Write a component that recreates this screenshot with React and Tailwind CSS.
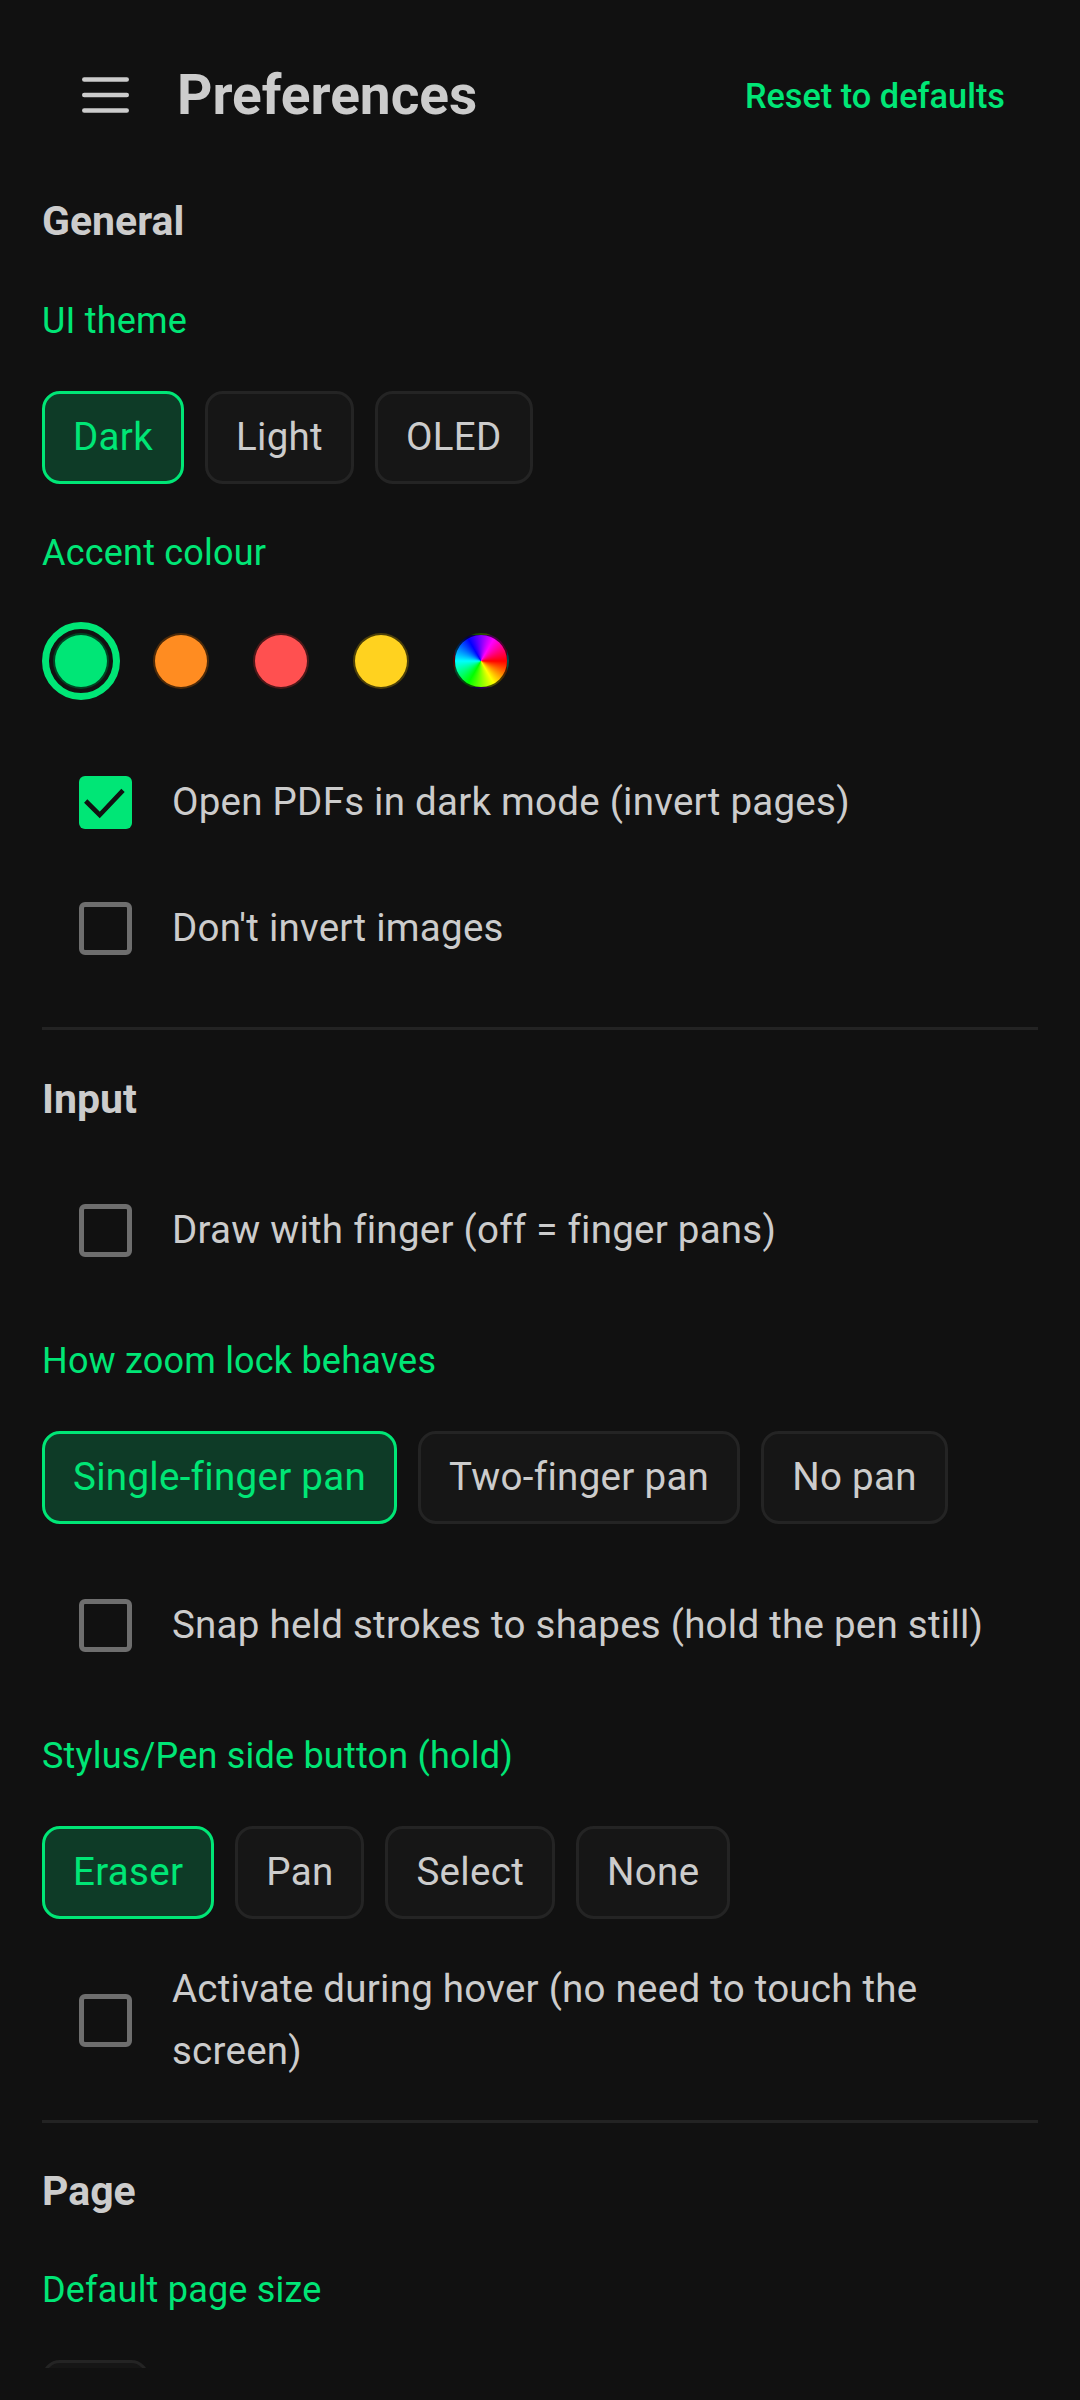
import React, { useState } from 'react';

const Hamburger = () => (
  <svg width="47" height="36" viewBox="0 0 47 36" className="shrink-0">
    <g stroke="#cccccc" strokeWidth="4.5" strokeLinecap="round">
      <line x1="2.25" y1="2.5" x2="44.75" y2="2.5" />
      <line x1="2.25" y1="18" x2="44.75" y2="18" />
      <line x1="2.25" y1="33.5" x2="44.75" y2="33.5" />
    </g>
  </svg>
);

const SectionTitle = ({ children, className = '' }) => (
  <h2 className={`text-[41px] leading-[49px] font-bold text-[#cccccc] ${className}`}>{children}</h2>
);

const Label = ({ children, className = '' }) => (
  <div className={`text-[36px] leading-[42px] tracking-[0.2px] text-[#00e676] ${className}`}>{children}</div>
);

const Segmented = ({ options, value, onChange, className = '' }) => (
  <div className={`flex gap-[21px] ${className}`}>
    {options.map((opt) => {
      const active = opt === value;
      return (
        <button
          key={opt}
          onClick={() => onChange(opt)}
          className={
            active
              ? 'h-[93px] px-[28px] rounded-[18px] border-[3px] border-[#00e676] bg-[#0e3b27] text-[#00e676] text-[38.5px] tracking-[0.3px] leading-none'
              : 'h-[93px] px-[28px] rounded-[18px] border-[3px] border-[#242424] bg-[#161616] text-[#cccccc] text-[38.5px] tracking-[0.3px] leading-none'
          }
        >
          {opt}
        </button>
      );
    })}
  </div>
);

const Checkbox = ({ checked }) =>
  checked ? (
    <div className="w-[53px] h-[53px] shrink-0 rounded-[6px] bg-[#00e676]">
      <svg width="53" height="53" viewBox="0 0 53 53">
        <path d="M6.7 25 L20.7 39 L44 14.3" fill="none" stroke="#111111" strokeWidth="4.6" />
      </svg>
    </div>
  ) : (
    <div className="w-[53px] h-[53px] shrink-0 rounded-[6px] border-[5px] border-[#6e6e6e]" />
  );

const CheckRow = ({ label, checked, onToggle, className = '' }) => (
  <div
    onClick={onToggle}
    className={`flex items-center min-h-[126px] pl-[37px] gap-[40px] cursor-pointer ${className}`}
  >
    <Checkbox checked={checked} />
    <span className="flex-1 text-[38.5px] leading-[62px] tracking-[0.25px] text-[#cccccc]">{label}</span>
  </div>
);

const Divider = ({ className = '' }) => <div className={`h-[3px] bg-[#232323] ${className}`} />;

const swatches = [
  { id: 'green', cls: 'bg-[#00e676]' },
  { id: 'orange', cls: 'bg-[#ff8c21]' },
  { id: 'red', cls: 'bg-[#ff5050]' },
  { id: 'yellow', cls: 'bg-[#ffd21f]' },
  { id: 'custom', cls: 'bg-[image:conic-gradient(from_90deg,#ff0000,#ffff00,#00ff00,#00ffff,#0000ff,#ff00ff,#ff0000)]' },
];

const App = () => {
  const [theme, setTheme] = useState('Dark');
  const [accent, setAccent] = useState('green');
  const [zoomLock, setZoomLock] = useState('Single-finger pan');
  const [sideButton, setSideButton] = useState('Eraser');
  const [checks, setChecks] = useState({
    darkPdf: true,
    noInvertImages: false,
    drawFinger: false,
    snapShapes: false,
    hover: false,
  });

  const toggle = (key) => setChecks((prev) => ({ ...prev, [key]: !prev[key] }));

  return (
    <div className="min-h-[2400px] bg-[#111111] font-['Roboto',sans-serif]">
      <div className="h-[2368px] overflow-hidden">
        {/* HEADER */}
        <header className="h-[190px] flex items-center pl-[82px] pr-[75px]">
          <Hamburger />
          <h1 className="ml-[48px] text-[55px] leading-[66px] font-bold text-[#cccccc]">Preferences</h1>
          <button className="ml-auto text-[34.3px] leading-[42px] font-medium text-[#00e676] translate-y-[1px]">
            Reset to defaults
          </button>
        </header>

        <main className="px-[42px]">
          {/* GENERAL */}
          <SectionTitle className="mt-[7px]">General</SectionTitle>
          <Label className="mt-[54px]">UI theme</Label>
          <Segmented className="mt-[49px]" options={['Dark', 'Light', 'OLED']} value={theme} onChange={setTheme} />

          <Label className="mt-[48px]">Accent colour</Label>
          <div className="mt-[48px] h-[78px] flex items-center">
            {swatches.map((s) => {
              const selected = s.id === accent;
              return (
                <div
                  key={s.id}
                  onClick={() => setAccent(s.id)}
                  className="w-[100px] flex items-center justify-center first:w-[78px] first:mr-[11px] cursor-pointer"
                >
                  {selected ? (
                    <div className="w-[78px] h-[78px] rounded-full border-[7px] border-[#00e676] flex items-center justify-center">
                      <div className={`w-[56px] h-[56px] rounded-full border-[2px] border-[rgba(0,0,0,0.7)] ${s.cls}`} />
                    </div>
                  ) : (
                    <div className={`w-[56px] h-[56px] rounded-full border-[2px] border-[rgba(0,0,0,0.7)] ${s.cls}`} />
                  )}
                </div>
              );
            })}
          </div>

          <CheckRow
            className="mt-[39px]"
            label="Open PDFs in dark mode (invert pages)"
            checked={checks.darkPdf}
            onToggle={() => toggle('darkPdf')}
          />
          <CheckRow
            label="Don't invert images"
            checked={checks.noInvertImages}
            onToggle={() => toggle('noInvertImages')}
          />

          <Divider className="mt-[36px]" />

          {/* INPUT */}
          <SectionTitle className="mt-[45px]">Input</SectionTitle>
          <CheckRow
            className="mt-[43px]"
            label="Draw with finger (off = finger pans)"
            checked={checks.drawFinger}
            onToggle={() => toggle('drawFinger')}
          />

          <Label className="mt-[47px]">How zoom lock behaves</Label>
          <Segmented
            className="mt-[49px]"
            options={['Single-finger pan', 'Two-finger pan', 'No pan']}
            value={zoomLock}
            onChange={setZoomLock}
          />

          <CheckRow
            className="mt-[38px]"
            label="Snap held strokes to shapes (hold the pen still)"
            checked={checks.snapShapes}
            onToggle={() => toggle('snapShapes')}
          />

          <Label className="mt-[47px]">Stylus/Pen side button (hold)</Label>
          <Segmented
            className="mt-[49px]"
            options={['Eraser', 'Pan', 'Select', 'None']}
            value={sideButton}
            onChange={setSideButton}
          />

          <CheckRow
            className="mt-[38px]"
            label="Activate during hover (no need to touch the screen)"
            checked={checks.hover}
            onToggle={() => toggle('hover')}
          />

          <Divider className="mt-[37px]" />

          {/* PAGE */}
          <SectionTitle className="mt-[44px]">Page</SectionTitle>
          <Label className="mt-[53px]">Default page size</Label>
          <div className="mt-[49px] flex gap-[21px]">
            {/* first page-size option, scrolled past the bottom edge */}
            <div className="w-[107px] h-[93px] rounded-[18px] border-[3px] border-[#242424] bg-[#161616]" />
          </div>
        </main>
      </div>
    </div>
  );
};

export default App;
